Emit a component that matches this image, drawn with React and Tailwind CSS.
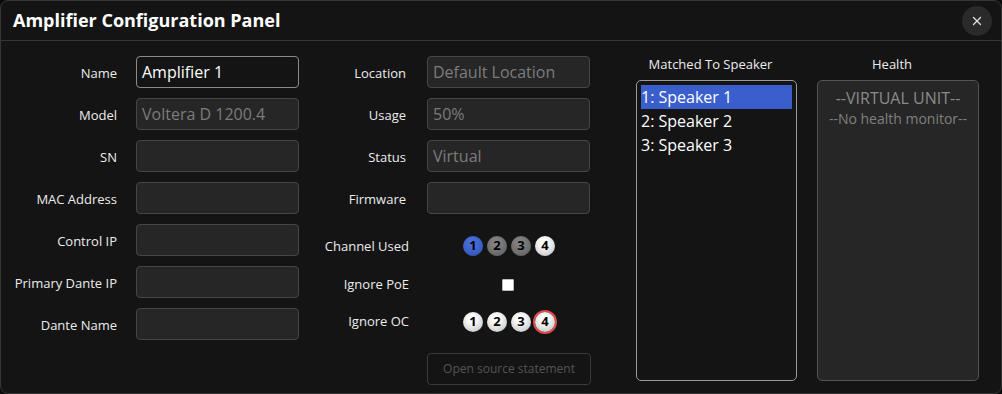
import React from 'react';
import { X } from 'lucide-react';

const LEFT_FIELDS = [
    { label: 'Name', value: 'Amplifier 1', editable: true },
    { label: 'Model', value: 'Voltera D 1200.4' },
    { label: 'SN', value: '' },
    { label: 'MAC Address', value: '' },
    { label: 'Control IP', value: '' },
    { label: 'Primary Dante IP', value: '' },
    { label: 'Dante Name', value: '' },
];

const MID_FIELDS = [
    { label: 'Location', value: 'Default Location' },
    { label: 'Usage', value: '50%' },
    { label: 'Status', value: 'Virtual' },
    { label: 'Firmware', value: '' },
];

const BALL = {
    blue: 'bg-[radial-gradient(circle_at_45%_35%,#4d74e0,#2f4fb0)]',
    gray: 'bg-[radial-gradient(circle_at_45%_35%,#8a8a8a,#5a5a5a)]',
    white: 'bg-[radial-gradient(circle_at_45%_35%,#ffffff_20%,#b8b8b8)]',
};

const Field = ({ value, editable }) => (
    <div
        className={
            editable
                ? 'w-[163px] h-[32px] rounded-[4px] border border-[#8a8a8a] bg-[#141414] px-[5px] flex items-center text-[16px] text-white'
                : 'w-[163px] h-[32px] rounded-[4px] border border-[#464646] bg-[#262626] px-[5px] flex items-center text-[16px] text-[#7c7c7c]'
        }
    >
        {value}
    </div>
);

const Ball = ({ n, tone, ring }) => (
    <div
        className={
            'w-[20px] h-[20px] rounded-full flex items-center justify-center text-[13px] font-bold text-black ' +
            BALL[tone] +
            (ring ? ' ring-[2px] ring-[#e5484d]' : '')
        }
    >
        {n}
    </div>
);

export default function App() {
    return (
        <div className="w-[1002px] h-[394px] bg-[#0b0b0b] font-['Open_Sans',sans-serif]">
            <div className="w-full h-full rounded-[8px] border border-[#353535] bg-[#141414] flex flex-col overflow-hidden">
                {/* Header */}
                <div className="h-[40px] border-b border-[#353535] flex items-center justify-between pl-[12px] pr-[9px] shrink-0">
                    <h2 className="text-[18px] font-bold text-white">Amplifier Configuration Panel</h2>
                    <button className="w-[30px] h-[30px] rounded-full bg-[#2a2a2a] flex items-center justify-center text-[#e0e0e0]">
                        <X className="w-[14px] h-[14px]" strokeWidth={2.2} />
                    </button>
                </div>

                {/* Body */}
                <div className="flex pt-[15px] text-[13px] text-[#ececec]">
                    {/* Left column */}
                    <div className="flex flex-col gap-[10px]">
                        {LEFT_FIELDS.map((f) => (
                            <div key={f.label} className="flex items-center gap-[19px]">
                                <span className="w-[116px] text-right pt-[3px]">{f.label}</span>
                                <Field value={f.value} editable={f.editable} />
                            </div>
                        ))}
                    </div>

                    {/* Middle column */}
                    <div className="flex flex-col">
                        <div className="flex flex-col gap-[10px]">
                            {MID_FIELDS.map((f) => (
                                <div key={f.label} className="flex items-center gap-[21px]">
                                    <span className="w-[107px] text-right pt-[3px]">{f.label}</span>
                                    <Field value={f.value} />
                                </div>
                            ))}
                        </div>
                        <div className="flex items-center gap-[21px] h-[38px] mt-[13px]">
                            <span className="w-[110px] text-right pt-[1px]">Channel Used</span>
                            <div className="flex gap-[4px] pl-[33px]">
                                <Ball n="1" tone="blue" />
                                <Ball n="2" tone="gray" />
                                <Ball n="3" tone="gray" />
                                <Ball n="4" tone="white" />
                            </div>
                        </div>
                        <div className="flex items-center gap-[21px] h-[38px] pt-[2px]">
                            <span className="w-[110px] text-right">Ignore PoE</span>
                            <div className="pl-[72px]">
                                <div className="w-[12px] h-[12px] bg-white rounded-[1px] border border-[#bbb]" />
                            </div>
                        </div>
                        <div className="flex items-center gap-[21px] h-[38px]">
                            <span className="w-[110px] text-right">Ignore OC</span>
                            <div className="flex gap-[4px] pl-[33px]">
                                <Ball n="1" tone="white" />
                                <Ball n="2" tone="white" />
                                <Ball n="3" tone="white" />
                                <Ball n="4" tone="white" ring />
                            </div>
                        </div>
                        <div className="flex mt-[12px] pl-[128px]">
                            <button className="w-[164px] h-[32px] rounded-[4px] border border-[#3a3a3a] text-[12px] text-[#555]">
                                Open source statement
                            </button>
                        </div>
                    </div>

                    {/* Speaker list */}
                    <div className="flex flex-col ml-[45px] -mt-[1px]">
                        <span className="h-[25px] leading-[18px] text-center pr-[12px]">Matched To Speaker</span>
                        <div className="w-[161px] h-[301px] rounded-[5px] border border-[#9a9a9a] bg-[#141414] p-[4px] text-[16px] text-white">
                            <div className="h-[24px] bg-[#3a5fcd] leading-[24px]">1: Speaker 1</div>
                            <div className="h-[24px] leading-[24px]">2: Speaker 2</div>
                            <div className="h-[24px] leading-[24px]">3: Speaker 3</div>
                        </div>
                    </div>

                    {/* Health */}
                    <div className="flex flex-col ml-[20px] -mt-[1px]">
                        <span className="h-[25px] leading-[18px] text-center pr-[12px]">Health</span>
                        <div className="w-[162px] h-[301px] rounded-[5px] border border-[#555] bg-[#262626] pt-[6px] flex flex-col items-center">
                            <span className="text-[16px] text-[#8a8a8a] leading-[22px]">--VIRTUAL UNIT--</span>
                            <span className="text-[14px] text-[#808080] leading-[20px]">--No health monitor--</span>
                        </div>
                    </div>
                </div>
            </div>
        </div>
    );
}
